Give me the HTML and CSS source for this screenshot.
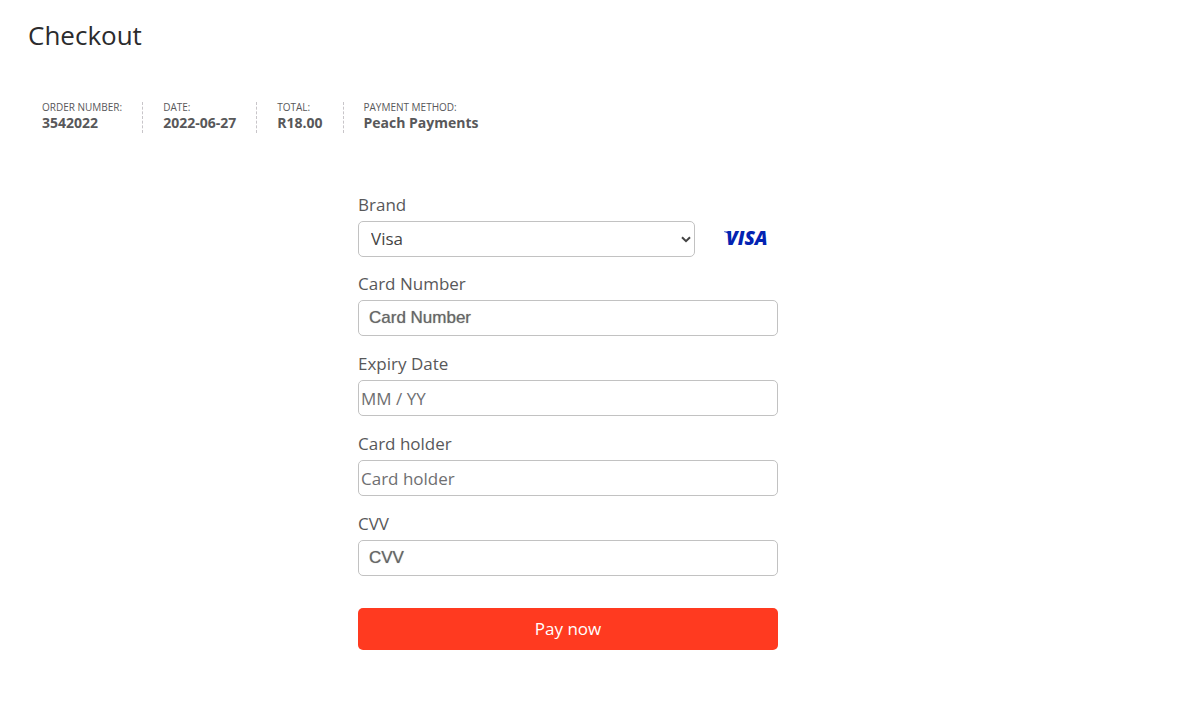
FILE: index.html
```html
<!DOCTYPE html>
<html lang="en">
<head>
<meta charset="utf-8">
<meta name="viewport" content="width=device-width, initial-scale=1">
<title>Checkout</title>
<link rel="stylesheet" href="styles.css">
</head>
<body>
<main class="page">
  <h1 class="title">Checkout</h1>
  <ul class="order">
    <li class="order-item">Order number:<strong>3542022</strong></li>
    <li class="order-item">Date:<strong>2022-06-27</strong></li>
    <li class="order-item">Total:<strong>R18.00</strong></li>
    <li class="order-item">Payment method:<strong>Peach Payments</strong></li>
  </ul>
  <form class="form">
    <div class="field field-brand">
      <label for="brand">Brand</label>
      <div class="brand-row">
        <div class="select-wrap">
          <select class="control select" id="brand"><option>Visa</option></select>
          <svg class="chevron" viewBox="0 0 10 7" width="10" height="7" aria-hidden="true"><path d="M1 1.2l4 4 4-4"/></svg>
        </div>
        <svg class="visa" viewBox="0 0 46 18" width="46" height="18" role="img" aria-label="Visa"><path d="M1 1.4h6.5v4.600C6 3.800 4 2.600 1 2z"/><text x="3" y="15">VISA</text></svg>
      </div>
    </div>
    <div class="field">
      <label for="number">Card Number</label>
      <input class="control secure" id="number" type="text" placeholder="Card Number">
    </div>
    <div class="field">
      <label for="expiry">Expiry Date</label>
      <input class="control" id="expiry" type="text" placeholder="MM / YY">
    </div>
    <div class="field">
      <label for="holder">Card holder</label>
      <input class="control" id="holder" type="text" placeholder="Card holder">
    </div>
    <div class="field">
      <label for="cvv">CVV</label>
      <input class="control secure" id="cvv" type="text" placeholder="CVV">
    </div>
    <button class="pay" type="submit">Pay now</button>
  </form>
</main>
</body>
</html>
```
FILE: styles.css
```css
* { box-sizing: border-box; }
body {
  margin: 0;
  background: #fff;
  color: #58585a;
  font-family: "Open Sans", "Noto Sans", sans-serif;
  font-size: 17px;
}
.page { padding: 15px 88px 40px 28px; }
.title {
  margin: 0;
  color: #2b2b2d;
  font-size: 26px;
  font-weight: 400;
  line-height: 40px;
}
.order {
  display: flex;
  flex-wrap: wrap;
  margin: 47px 0 60px;
  padding: 0 0 0 14px;
  list-style: none;
}
.order-item {
  padding-right: 20px;
  margin-right: 20px;
  border-right: 1px dashed #c8c5c9;
  font-size: 10px;
  line-height: 11px;
  text-transform: uppercase;
}
.order-item:last-child { border: 0; margin: 0; padding: 0; }
.order-item strong {
  display: block;
  font-size: 14px;
  line-height: 20px;
  text-transform: none;
}
.form { max-width: 420px; margin: 0 auto; }
.field { margin-bottom: 16px; }
.field-brand { margin-bottom: 15px; }
.field label { display: block; line-height: 24px; padding-bottom: 4px; }
.brand-row { display: flex; align-items: center; gap: 28px; }
.select-wrap { position: relative; flex: 1; }
.control {
  display: block;
  width: 100%;
  height: 36px;
  padding: 2px;
  border: 1px solid #c2c2c2;
  border-radius: 5px;
  background: #fff;
  color: #444;
  font: inherit;
}
.control::placeholder { color: #6f6f71; opacity: 1; }
.select { appearance: none; padding: 0 24px 2px 12px; }
.chevron {
  position: absolute;
  top: 15px;
  right: 4px;
  fill: none;
  stroke: #444;
  stroke-width: 2;
  pointer-events: none;
}
.secure { padding: 0 10px; font-family: "Liberation Sans", Arial, sans-serif; }
.secure::placeholder { color: #666; text-shadow: 0 0 1px #999; }
.visa { margin-right: 9px; fill: #0323b2; overflow: visible; }
.visa text { font: italic 800 19px "Open Sans", sans-serif; }
.pay {
  display: block;
  width: 100%;
  margin-top: 32px;
  padding: 9px;
  border: 0;
  border-radius: 5px;
  background: #ff3a20;
  color: #fff;
  font: inherit;
  line-height: 24px;
}
```
